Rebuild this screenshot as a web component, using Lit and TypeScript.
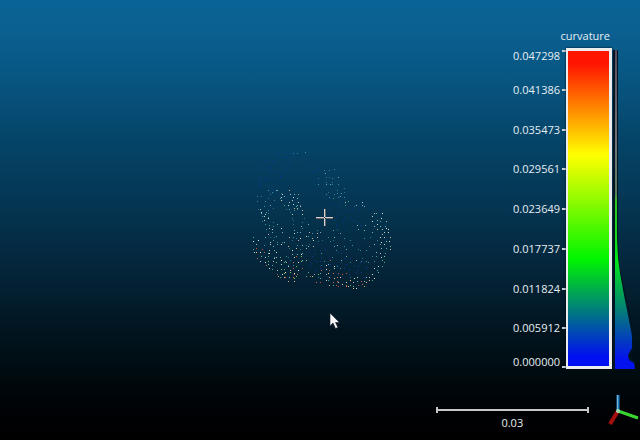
import { LitElement, html, css, svg } from "lit";
import { customElement } from "lit/decorators.js";

type Point = [number, number];

interface Cluster {
  outline: Point[];
  density: number;
  colors: string[];
}

const TICKS = [
  "0.047298",
  "0.041386",
  "0.035473",
  "0.029561",
  "0.023649",
  "0.017737",
  "0.011824",
  "0.005912",
  "0.000000",
];

const BLUE = ["#063c98", "#053e84", "#0832a4"];
const TEAL = ["#2a8494", "#349494", "#237484", "#68aab0"];
const PALE = ["#c4d0c4", "#e0dec0", "#8cbcac", "#4cac88", "#d0b498"];
const WARM = ["#e0c488", "#d06c44", "#ece0c0", "#80bc58", "#c45038"];

// Patches of the scanned surface, in scene units of one pixel.
const CLUSTERS: Cluster[] = [
  { outline: [[22, 12], [46, 10], [48, 24], [36, 36], [28, 54], [8, 54], [6, 34]], density: 0.5, colors: BLUE },
  { outline: [[44, 12], [58, 12], [58, 17], [44, 17]], density: 0.8, colors: TEAL },
  { outline: [[54, 18], [70, 24], [76, 52], [54, 44]], density: 0.35, colors: BLUE },
  { outline: [[66, 28], [84, 26], [96, 40], [100, 56], [88, 62], [70, 50]], density: 0.5, colors: TEAL },
  { outline: [[8, 56], [24, 46], [36, 52], [22, 78], [10, 72]], density: 0.45, colors: TEAL },
  { outline: [[24, 50], [50, 50], [56, 62], [52, 72], [44, 72], [32, 62]], density: 0.8, colors: [...PALE, "#68aab0"] },
  { outline: [[36, 62], [56, 64], [58, 78], [74, 92], [64, 110], [44, 98]], density: 0.75, colors: [...PALE, ...TEAL] },
  { outline: [[11, 66], [20, 74], [42, 96], [62, 106], [56, 122], [36, 128], [14, 106]], density: 0.6, colors: [...TEAL, ...PALE] },
  { outline: [[2, 96], [7, 92], [14, 108], [34, 118], [50, 136], [44, 143], [30, 138], [6, 116]], density: 0.85, colors: [...WARM, ...PALE] },
  { outline: [[38, 122], [54, 112], [60, 120], [46, 143], [34, 138]], density: 0.8, colors: WARM },
  { outline: [[56, 132], [68, 130], [78, 116], [96, 130], [116, 140], [104, 149], [74, 144], [58, 140]], density: 0.8, colors: [...PALE, ...WARM, ...TEAL] },
  { outline: [[86, 142], [122, 141], [116, 149], [90, 149]], density: 0.85, colors: WARM },
  { outline: [[122, 66], [136, 72], [142, 90], [143, 110], [134, 128], [122, 144], [114, 142], [130, 118], [132, 98], [122, 78]], density: 0.85, colors: [...PALE, "#68aab0"] },
  { outline: [[94, 58], [114, 60], [128, 68], [126, 78], [112, 72], [94, 64]], density: 0.6, colors: [...TEAL, ...PALE] },
  { outline: [[76, 56], [110, 66], [118, 86], [100, 92], [78, 80]], density: 0.45, colors: BLUE },
  { outline: [[74, 88], [96, 86], [124, 78], [132, 104], [126, 124], [90, 122], [66, 110]], density: 0.35, colors: [...TEAL, "#8cbcac"] },
  { outline: [[60, 108], [82, 106], [120, 122], [116, 138], [62, 130]], density: 0.45, colors: BLUE },
];

const inside = (x: number, y: number, outline: Point[]): boolean => {
  let hit = false;
  for (let i = 0, j = outline.length - 1; i < outline.length; j = i++) {
    const [xi, yi] = outline[i];
    const [xj, yj] = outline[j];
    if (yi > y !== yj > y && x < ((xj - xi) * (y - yi)) / (yj - yi) + xi) hit = !hit;
  }
  return hit;
};

// Samples every patch on a jittered lattice and gathers one path per colour.
const samplePoints = (): Map<string, string> => {
  let seed = 90217;
  const random = () => {
    seed = (seed * 16807) % 2147483647;
    return seed / 2147483647;
  };
  const paths = new Map<string, string>();
  for (const { outline, density, colors } of CLUSTERS) {
    for (let row = 0; row < 40; row++) {
      for (let column = 0; column < 40; column++) {
        const x = column * 4 + Math.floor(random() * 3);
        const y = row * 4 + Math.floor(random() * 3);
        const keep = random() < density;
        const color = colors[Math.floor(random() * colors.length)];
        if (keep && inside(x, y, outline)) {
          paths.set(color, (paths.get(color) ?? "") + `M${x} ${y}h1v1h-1z`);
        }
      }
    }
  }
  return paths;
};

@customElement("point-cloud")
export class PointCloud extends LitElement {
  static styles = css`
    :host {
      display: block;
    }
    .cloud {
      display: block;
      width: 160px;
      height: 160px;
    }
  `;

  private paths = samplePoints();

  render() {
    return html`
      <svg class="cloud" viewBox="0 0 160 160" role="img" aria-label="Point cloud" shape-rendering="crispEdges">
        ${[...this.paths].map(([color, d]) => svg`<path d=${d} fill=${color} />`)}
        <path d="M68 77h17v1h-17zM76 69v17h1v-17z" fill="#dcd0cc" />
        <path d="M68 78h8v1h-8zM78 78h7v1h-7zM77 69h1v8h-1zM77 79h1v7h-1z" fill="#5e666e" />
      </svg>
    `;
  }
}

@customElement("color-legend")
export class ColorLegend extends LitElement {
  static styles = css`
    :host {
      display: grid;
      grid-template-columns: auto 46px 24px;
      grid-template-rows: 14px 1fr;
      row-gap: 5px;
      column-gap: 0;
    }
    .title {
      grid-column: 1 / 3;
      grid-row: 1;
      justify-self: end;
      padding-right: 2px;
      line-height: 14px;
      white-space: nowrap;
    }
    .ticks {
      grid-column: 1;
      grid-row: 2;
      display: grid;
      grid-template-rows: 1fr repeat(7, 2fr) 1fr;
      margin: 2px 0 1px;
      padding: 0;
      list-style: none;
    }
    .tick {
      display: flex;
      align-items: center;
      gap: 2px;
      line-height: 12px;
    }
    .tick::after {
      content: "";
      width: 4px;
      height: 2px;
      background: #c8d2d8;
    }
    .tick:first-child {
      align-items: flex-start;
    }
    .tick:last-child {
      align-items: flex-end;
    }
    .ramp {
      grid-column: 2;
      grid-row: 2;
      border: 3px solid #ececec;
      border-width: 3px 3px 3px 2px;
      background: linear-gradient(#ff1400 0 4%, #ffff00 33%, #00f500 66%, #0010f0 97%);
      box-shadow: 0 0 2px #000c18;
    }
    .histogram {
      grid-column: 3;
      grid-row: 2;
      width: 24px;
      height: 100%;
      min-height: 0;
    }
  `;

  render() {
    return html`
      <div class="title">curvature</div>
      <ul class="ticks">
        ${TICKS.map((value) => html`<li class="tick">${value}</li>`)}
      </ul>
      <div class="ramp"></div>
      <svg class="histogram" viewBox="0 0 24 321" preserveAspectRatio="none" aria-hidden="true">
        <defs>
          <linearGradient id="fill" gradientUnits="userSpaceOnUse" x1="0" y1="0" x2="0" y2="321">
            <stop offset="0" stop-color="#5c4a5c" />
            <stop offset="0.3" stop-color="#70757a" />
            <stop offset="0.45" stop-color="#5a7c60" />
            <stop offset="0.48" stop-color="#30c820" />
            <stop offset="0.66" stop-color="#00e818" />
            <stop offset="0.82" stop-color="#047c78" />
            <stop offset="0.97" stop-color="#0412ee" />
          </linearGradient>
        </defs>
        <path d="M1 2H6V190L7 215L12 240L17 260L21 285L21 301L18 307L23 314V321H1Z" fill="#001424" />
        <path d="M3 2H5V150H5V190L6 210L8 225L12 247L16 267L20 288L20 300L16 307L17 312L22 315L23 321H3Z" fill="url(#fill)" />
      </svg>
    `;
  }
}

@customElement("app-root")
export class AppRoot extends LitElement {
  static styles = css`
    :host {
      display: block;
      font: 500 11px "Open Sans", "Noto Sans", sans-serif;
      color: #e6eef2;
    }
    .viewport {
      position: relative;
      box-sizing: border-box;
      display: flex;
      flex-direction: column;
      gap: 25px;
      height: 100vh;
      min-height: 300px;
      padding: 29px 0 10px;
      overflow: hidden;
      background: linear-gradient(#0a6496 0%, #0a5f90 8%, #07527c 21%, #054468 32%, #043450 48%, #042438 62%, #01141e 76%, #00080c 87%, #000104 95%, #000000 100%);
    }
    .scene {
      position: absolute;
      top: 50%;
      left: 50%;
      margin: -80px 0 0 -72px;
    }
    .pointer {
      position: absolute;
      top: 50%;
      left: 50%;
      width: 12px;
      height: 18px;
      margin: 92px 0 0 9px;
    }
    .legend {
      flex: 1;
      align-self: flex-end;
      margin-right: 4px;
    }
    .footer {
      display: flex;
      justify-content: flex-end;
      gap: 18px;
      padding-right: 1px;
    }
    .scale {
      width: 24%;
      margin: 13px 0 0;
      text-align: center;
    }
    .rule {
      box-sizing: border-box;
      display: flex;
      align-items: center;
      height: 6px;
      border: solid #c8c8c8;
      border-width: 0 2px;
    }
    .rule::before {
      content: "";
      flex: 1;
      height: 2px;
      background: #c8c8c8;
    }
    .distance {
      margin-top: 3px;
      line-height: 14px;
    }
    .axes {
      width: 32px;
      height: 36px;
    }
  `;

  render() {
    return html`
      <main class="viewport">
        <point-cloud class="scene"></point-cloud>
        <svg class="pointer" viewBox="0 0 12 18" aria-hidden="true">
          <path d="M1 1V14L4 11L6.5 16.5L9 15.5L6.5 10.5H10.5Z" fill="#f4f6f8" stroke="#101820" stroke-width="0.6" />
        </svg>
        <color-legend class="legend"></color-legend>
        <footer class="footer">
          <div class="scale">
            <div class="rule"></div>
            <div class="distance">0.03</div>
          </div>
          <svg class="axes" viewBox="0 0 32 36" role="img" aria-label="Axes" fill="none">
            <path d="M11 17L3 30" stroke="#a81010" stroke-width="4" />
            <path d="M11 17L31 24" stroke="#38d830" stroke-width="3" />
            <path d="M11 1V17" stroke="#2080c4" stroke-width="3" />
            <path d="M10.5 1V16" stroke="#78aed0" stroke-width="1" />
            <circle cx="11" cy="17" r="2" fill="#a0dcb0" />
          </svg>
        </footer>
      </main>
    `;
  }
}
